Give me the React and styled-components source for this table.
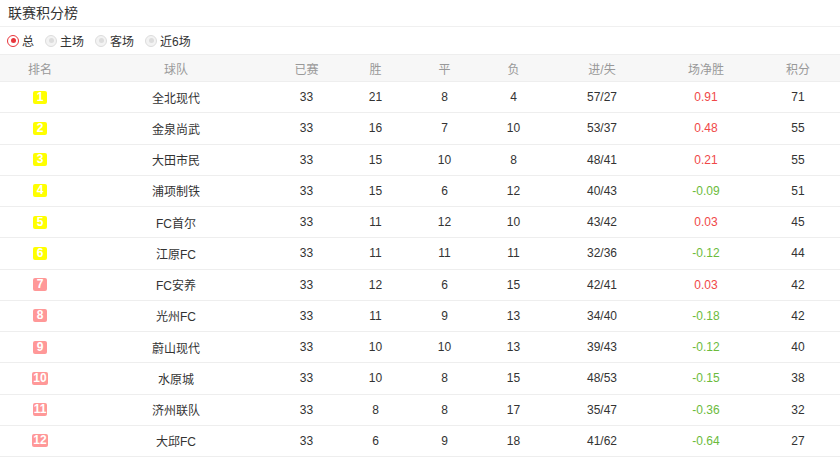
import styled, { createGlobalStyle } from 'styled-components';

const GlobalStyle = createGlobalStyle`
  body {
    margin: 0;
    background: #fff;
    font-family: "Liberation Sans", Arial, "Noto Sans CJK SC", sans-serif;
    color: #333;
  }
`;

const columns = '80px 192px 69px 69px 69px 69px 108px 100px 84px';

const teams = [
  ['全北现代', 33, 21, 8, 4, '57/27', '0.91', 71],
  ['金泉尚武', 33, 16, 7, 10, '53/37', '0.48', 55],
  ['大田市民', 33, 15, 10, 8, '48/41', '0.21', 55],
  ['浦项制铁', 33, 15, 6, 12, '40/43', '-0.09', 51],
  ['FC首尔', 33, 11, 12, 10, '43/42', '0.03', 45],
  ['江原FC', 33, 11, 11, 11, '32/36', '-0.12', 44],
  ['FC安养', 33, 12, 6, 15, '42/41', '0.03', 42],
  ['光州FC', 33, 11, 9, 13, '34/40', '-0.18', 42],
  ['蔚山现代', 33, 10, 10, 13, '39/43', '-0.12', 40],
  ['水原城', 33, 10, 8, 15, '48/53', '-0.15', 38],
  ['济州联队', 33, 8, 8, 17, '35/47', '-0.36', 32],
  ['大邱FC', 33, 6, 9, 18, '41/62', '-0.64', 27],
];

const filters = ['总', '主场', '客场', '近6场'];
const heads = ['排名', '球队', '已赛', '胜', '平', '负', '进/失', '场净胜', '积分'];

const App = () => {
  return (
    <Page>
      <GlobalStyle />
      <TitleBar>联赛积分榜</TitleBar>
      <FilterBar>
        {filters.map((f, i) => (
          <Filter key={f}>
            <Radio active={i === 0} />
            {f}
          </Filter>
        ))}
      </FilterBar>
      <HeadRow>
        {heads.map((h) => (
          <Cell key={h}>{h}</Cell>
        ))}
      </HeadRow>
      {teams.map((t, i) => (
        <Row key={t[0]}>
          <Cell>
            <Badge top={i < 6}>{i + 1}</Badge>
          </Cell>
          <Cell>{t[0]}</Cell>
          <Cell>{t[1]}</Cell>
          <Cell>{t[2]}</Cell>
          <Cell>{t[3]}</Cell>
          <Cell>{t[4]}</Cell>
          <Cell>{t[5]}</Cell>
          <Diff negative={t[6].startsWith('-')}>{t[6]}</Diff>
          <Cell>{t[7]}</Cell>
        </Row>
      ))}
    </Page>
  );
};

export default App;

const Page = styled.div`
  width: 840px;
  height: 457px;
  overflow: hidden;
  font-size: 12px;
`;

const TitleBar = styled.div`
  box-sizing: border-box;
  height: 27px;
  padding: 0 8px 3px;
  display: flex;
  align-items: center;
  font-size: 14px;
  color: #333;
  border-bottom: 1px solid #f0f0f0;
`;

const FilterBar = styled.div`
  height: 27px;
  display: flex;
  align-items: center;
  padding-left: 7px;
  gap: 11px;
`;

const Filter = styled.div`
  display: flex;
  align-items: center;
  gap: 3px;
  color: #333;
`;

const Radio = styled.span`
  box-sizing: border-box;
  width: 12px;
  height: 12px;
  border-radius: 50%;
  border: ${(props) => (props.active ? '1.5px solid #e8353b' : '1px solid #ddd')};
  background: ${(props) => (props.active ? '#fff' : '#f3f3f3')};
  display: flex;
  align-items: center;
  justify-content: center;
  &::after {
    content: '';
    width: 5px;
    height: 5px;
    border-radius: 50%;
    background: ${(props) => (props.active ? '#e8353b' : '#ddd')};
  }
`;

const HeadRow = styled.div`
  box-sizing: border-box;
  display: grid;
  grid-template-columns: ${columns};
  height: 28px;
  background: #f7f7f7;
  color: #999;
  border-top: 1px solid #eee;
  border-bottom: 1px solid #eee;
`;

const Row = styled.div`
  box-sizing: border-box;
  display: grid;
  grid-template-columns: ${columns};
  height: 31.25px;
  border-bottom: 1px solid #eee;
  color: #333;
`;

const Cell = styled.div`
  display: flex;
  align-items: center;
  justify-content: center;
`;

const Diff = styled(Cell)`
  color: ${(props) => (props.negative ? '#6cbb3c' : '#f04848')};
`;

const Badge = styled.span`
  box-sizing: border-box;
  min-width: 14px;
  height: 13px;
  padding: 0 1px;
  border-radius: 2px;
  background: ${(props) => (props.top ? '#ffff00' : '#ff9898')};
  color: #fff;
  font-size: 12px;
  font-weight: bold;
  line-height: 13px;
  text-align: center;
`;
